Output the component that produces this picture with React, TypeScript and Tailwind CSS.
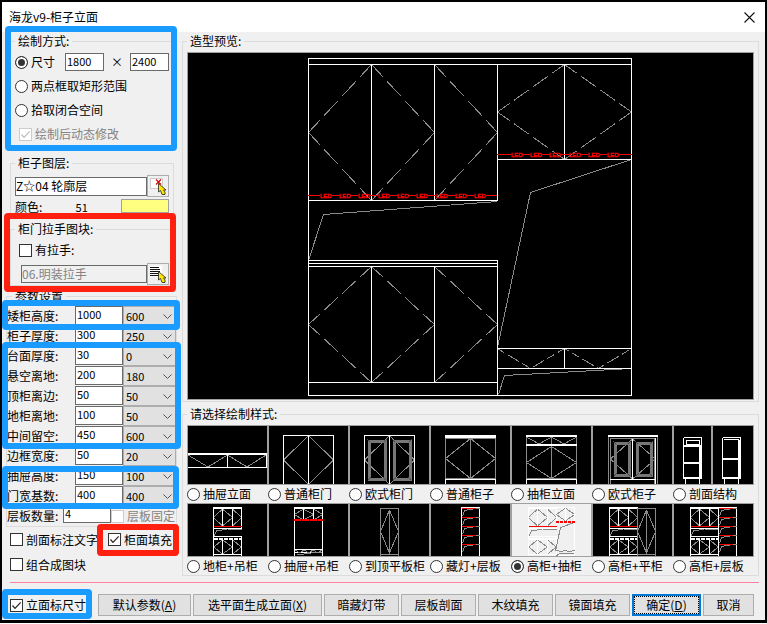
import { useState } from 'react';
import type { ReactNode } from 'react';

const params = [
  { label: '矮柜高度', value: '1000', preset: '600' },
  { label: '柜子厚度', value: '300', preset: '250' },
  { label: '台面厚度', value: '30', preset: '0' },
  { label: '悬空离地', value: '200', preset: '180' },
  { label: '顶柜离边', value: '50', preset: '50' },
  { label: '地柜离地', value: '100', preset: '50' },
  { label: '中间留空', value: '450', preset: '600' },
  { label: '边框宽度', value: '50', preset: '20' },
  { label: '抽屉高度', value: '150', preset: '100' },
  { label: '门宽基数', value: '400', preset: '400' },
];

/* ---------- form controls ---------- */

function Group({
  title,
  className = '',
  children,
}: {
  title: string;
  className?: string;
  children: ReactNode;
}) {
  return (
    <fieldset className={`min-w-0 border border-[#dcdcdc] ${className}`}>
      <legend className="px-[3px] leading-4">{title}:</legend>
      {children}
    </fieldset>
  );
}

function Radio({
  name,
  label,
  checked,
  onChange,
}: {
  name: string;
  label: string;
  checked: boolean;
  onChange: () => void;
}) {
  return (
    <label className="flex items-center gap-[3px] whitespace-nowrap">
      <input
        type="radio"
        name={name}
        checked={checked}
        onChange={onChange}
        className="h-[13px] w-[13px] shrink-0 appearance-none rounded-full border border-[#333] bg-white checked:bg-[#333] checked:shadow-[inset_0_0_0_2px_white]"
      />
      {label}
    </label>
  );
}

function Check({
  label,
  checked = false,
  disabled = false,
}: {
  label: string;
  checked?: boolean;
  disabled?: boolean;
}) {
  return (
    <label
      className={`flex items-center gap-[3px] whitespace-nowrap ${disabled ? 'text-[#838383]' : ''}`}
    >
      <span className="relative h-[13px] w-[13px] shrink-0">
        <input
          type="checkbox"
          defaultChecked={checked}
          disabled={disabled}
          className="peer block h-[13px] w-[13px] appearance-none border border-[#333] bg-white disabled:border-[#ccc]"
        />
        <svg
          viewBox="0 0 13 13"
          className="pointer-events-none absolute inset-0 hidden text-[#222] peer-checked:block peer-disabled:text-[#bbb]"
        >
          <path d="M2.5 6.5 5 9.3 10.7 3.3" fill="none" stroke="currentColor" strokeWidth="1.2" />
        </svg>
      </span>
      {label}
    </label>
  );
}

function PushButton({ className, children }: { className: string; children: ReactNode }) {
  return (
    <button
      type="button"
      className={`h-[22px] shrink-0 whitespace-nowrap border border-[#adadad] bg-[#e1e1e1] leading-5 ${className}`}
    >
      {children}
    </button>
  );
}

function Cursor() {
  return (
    <path
      d="M10.5 7.5v8.500l2-1.500 1.500 4h3v-2.500l-1.500-2h2.500z"
      fill="#ffe600"
      stroke="#222"
      strokeWidth="0.8"
    />
  );
}

/* ---------- cabinet drawings ---------- */

// Opening marks of one door, hinge towards the pointed side
function Door({
  x1,
  x2,
  y1,
  y2,
  dashed = false,
}: {
  x1: number;
  x2: number;
  y1: number;
  y2: number;
  dashed?: boolean;
}) {
  const mid = (y1 + y2) / 2;
  const dash = dashed ? '18 6.5 22 7 22 6.5 18' : undefined;
  return (
    <g stroke="#8a8a8a">
      <path pathLength={100} strokeDasharray={dash} d={`M${x1} ${mid}L${x2} ${y1}`} />
      <path pathLength={100} strokeDasharray={dash} d={`M${x1} ${mid}L${x2} ${y2}`} />
    </g>
  );
}

function LedStrip({ x1, x2, y, marks }: { x1: number; x2: number; y: number; marks: number[] }) {
  const ends = [x1, ...marks.map((m) => m + 12)];
  const starts = [...marks, x2];
  return (
    <g>
      {ends.map((from, i) => (
        <path key={from} d={`M${from} ${y}H${starts[i]}`} stroke="#f00" />
      ))}
      {marks.map((m) => (
        <text
          key={m}
          x={m}
          y={y + 2.5}
          fill="#f00"
          stroke="#f00"
          strokeWidth="0.4"
          fontSize="6"
          className="font-['Liberation_Sans',sans-serif]"
        >
          LED
        </text>
      ))}
    </g>
  );
}

function Preview() {
  return (
    <svg
      viewBox="188 53 565 346"
      className="block h-[346px] w-full"
      fill="none"
      stroke="#fff"
      shapeRendering="crispEdges"
    >
      {/* doors */}
      <Door x1={308.5} x2={371.5} y1={64.5} y2={200.5} dashed />
      <Door x1={434.5} x2={371.5} y1={64.5} y2={200.5} dashed />
      <Door x1={497.5} x2={434.5} y1={64.5} y2={200.5} dashed />
      <Door x1={497.5} x2={564.5} y1={64.5} y2={159.5} dashed />
      <Door x1={631.5} x2={564.5} y1={64.5} y2={159.5} dashed />
      <Door x1={308.5} x2={371.5} y1={266.5} y2={382.5} dashed />
      <Door x1={434.5} x2={371.5} y1={266.5} y2={382.5} dashed />
      <Door x1={497.5} x2={434.5} y1={266.5} y2={382.5} dashed />
      {/* open areas */}
      <g stroke="#8a8a8a">
        <path d="M497.5 201.5 323.5 214.5 308.5 260.5" />
        <path d="M631.5 159.5 530.5 192.5 497.5 347.5" />
        <path d="M631.5 368.5 504.5 375.5 498.5 394.5" />
        <path strokeDasharray="8 4 13 4" d="M497.5 348.5 530.5 368.5 564.5 348.5 598.5 368.5 631.5 348.5" />
      </g>
      {/* carcass */}
      <path d="M308.5 58.5H631.5V395.5H308.5zM308.5 64.5H631.5M371.5 64.5V200.5M434.5 64.5V200.5M497.5 64.5V200.5M308.5 200.5H497.5" />
      <path d="M564.5 64.5V159.5M497.5 159.5H631.5" />
      <path d="M308.5 260.5H497.5V395.5M308.5 263.5H497.5M308.5 266.5H497.5M308.5 382.5H497.5M371.5 266.5V382.5M434.5 266.5V382.5" />
      <path d="M497.5 348.5H631.5M497.5 368.5H631.5M564.5 348.5V368.5" />
      <LedStrip x1={308} x2={497} y={195.5} marks={[320, 339, 358, 378, 397, 416, 436, 455, 474]} />
      <LedStrip x1={497} x2={632} y={154.5} marks={[511, 530, 549, 569, 588, 607]} />
    </svg>
  );
}

function DrawerFront() {
  return (
    <>
      <path stroke="#8a8a8a" d="M0 29 20 41 39.5 29 59 41 78 29" />
      <path d="M0 41.5H78.5V28M39.5 28V41" />
      <path strokeWidth="2" d="M0 28H79" />
    </>
  );
}

function PlainDoors() {
  return (
    <>
      <Door x1={14.5} x2={39.5} y1={9.5} y2={58.5} />
      <Door x1={64.5} x2={39.5} y1={9.5} y2={58.5} />
      <path d="M14.5 58V9.5H64.5V58M39.5 9.5V58" />
    </>
  );
}

function FramedPanel({ x, y, w, h }: { x: number; y: number; w: number; h: number }) {
  return (
    <g>
      <rect x={x} y={y} width={w} height={h} stroke="#777" strokeWidth="3" />
      <path
        d={`M${x - 1.5} ${y - 1.5}l3 3M${x + w + 1.5} ${y - 1.5}l-3 3M${x - 1.5} ${y + h + 1.5}l3 -3M${x + w + 1.5} ${y + h + 1.5}l-3 -3`}
        stroke="#444"
      />
    </g>
  );
}

function EuroDoors() {
  return (
    <>
      <Door x1={14.5} x2={39.5} y1={9.5} y2={58.5} />
      <Door x1={64.5} x2={39.5} y1={9.5} y2={58.5} />
      <FramedPanel x={19} y={15} w={16} h={38} />
      <FramedPanel x={44} y={15} w={16} h={38} />
      <path d="M14.5 58V9.5H64.5V58" />
      <path d="M39.5 9.5V58" />
    </>
  );
}

function PlainCabinet() {
  return (
    <>
      <Door x1={14.5} x2={39.5} y1={12.5} y2={52.5} />
      <Door x1={64.5} x2={39.5} y1={12.5} y2={52.5} />
      <path stroke="#8a8a8a" d="M14.5 12.5H64.5V52.5H14.5zM39.5 12V52" />
      <path d="M14.5 58V53.5H64.5V58" />
      <path strokeWidth="3" d="M14 10.5H65" />
    </>
  );
}

function DrawerCabinet() {
  return (
    <>
      <path stroke="#8a8a8a" d="M14.5 11 27 18 39.5 11 52 18 64.5 11" />
      <Door x1={14.5} x2={39.5} y1={20.5} y2={52.5} />
      <Door x1={64.5} x2={39.5} y1={20.5} y2={52.5} />
      <path stroke="#8a8a8a" d="M14.5 10V52.5H64.5V10M39.5 11V52" />
      <path d="M14.5 58V53.5H64.5V58" />
      <path strokeWidth="2" d="M14 10H65M14 19H65" />
    </>
  );
}

function EuroCabinet() {
  return (
    <>
      <Door x1={17.5} x2={39.5} y1={13} y2={53} />
      <Door x1={62.5} x2={39.5} y1={13} y2={53} />
      <FramedPanel x={22} y={17} w={14} h={32} />
      <FramedPanel x={44} y={17} w={14} h={32} />
      <path stroke="#8a8a8a" d="M15.5 58V11M17.5 58V12.5H61.5V58M64.5 58V11" />
      <path d="M39.5 13V53M62.5 12V58M17 53.5H62" />
      <path strokeWidth="2" d="M15 10H65" />
    </>
  );
}

function Sections() {
  return (
    <>
      <path d="M9.5 11.5H27.5V53M9.5 11.5V53M11.5 58V53M25.5 58V53M12.5 14.5H25.5V18.5H12.5z" />
      <path strokeWidth="2" d="M10 20H28M10 37H28M10 52H28M26 20V52" />
      <path d="M48.5 11.5H66.5V53M48.5 11.5V53M50.5 58V53M64.5 58V53M50 13.5H65" />
      <path strokeWidth="2" d="M49 33H67M49 52H67M65 14V52" />
      <path stroke="#a0a0a0" strokeWidth="2" d="M38 0V58" />
    </>
  );
}

// Three-door wall unit over a three-door base unit, 28 wide
function StackedUnit({ x, pale = false }: { x: number; pale?: boolean }) {
  const a = x + 9;
  const b = x + 19;
  const c = x + 28;
  return (
    <>
      <Door x1={x} x2={a} y1={5} y2={22} />
      <Door x1={b} x2={a} y1={5} y2={22} />
      <Door x1={c} x2={b} y1={5} y2={22} />
      <Door x1={x} x2={a} y1={36} y2={50} />
      <Door x1={b} x2={a} y1={36} y2={50} />
      <Door x1={c} x2={b} y1={36} y2={50} />
      <path stroke="#8a8a8a" d={`M${c} 25H${x + 14}L${x + 3} 27 ${x} 33`} />
      <path d={`M${x} 52V3.5H${c}V24M${x} 24.5H${c}M${x} 32.5H${c}V52M${x} 50.5H${c}`} />
      <path strokeWidth="2" d={`M${x} 4H${c}`} />
      <path strokeWidth="2" d={`M${x} 35H${c}`} strokeDasharray={pale ? undefined : '4 1'} />
      <path d={`M${a} 5V23M${b} 5V23M${a} 35V51M${b} 35V51`} />
      <path stroke="#f00" d={`M${x} 22.5H${c}`} />
    </>
  );
}

function Shelves({ x }: { x: number }) {
  return (
    <>
      <path d={`M${x} 52V3.5H${x + 18}V52`} />
      {[4.5, 13.5, 22.5, 31.5, 40.5].map((y) => (
        <g key={y}>
          <path stroke="#8a8a8a" d={`M${x + 18} ${y}H${x + 14}L${x + 3} ${y + 2} ${x + 1} ${y + 8}`} />
          <path stroke="#f00" d={`M${x} ${y}H${x + 14}`} />
        </g>
      ))}
    </>
  );
}

function TallDoor({ x }: { x: number }) {
  return (
    <g stroke="#8a8a8a">
      <Door x1={x} x2={x + 9} y1={6} y2={49} />
      <Door x1={x + 18} x2={x + 9} y1={6} y2={49} />
      <path d={`M${x} 52V4.5H${x + 18}V52M${x + 9} 6V50M${x} 50.5H${x + 18}`} />
    </g>
  );
}

function HangingWithDrawer() {
  return (
    <>
      <Door x1={25.5} x2={34.5} y1={5} y2={16} />
      <Door x1={44.5} x2={34.5} y1={5} y2={16} />
      <Door x1={53.5} x2={44.5} y1={5} y2={16} />
      <path d="M25.5 52V4H53.5V52M34.5 5V16M44.5 5V16M25.5 45.5H53.5M25.5 48.5H44" />
      <path stroke="#8a8a8a" d="M26 46 31 49 35 46 40 49 44 46 49 49 53 46M53 48 42 49 28 51" />
      <path strokeWidth="2" d="M25 4H54" />
      <path stroke="#f00" strokeWidth="2" strokeDasharray="7 1" d="M25 16H54" />
    </>
  );
}

function TallWithDrawer() {
  return (
    <>
      <rect width="79" height="52" fill="#f0f0f0" stroke="none" />
      <StackedUnit x={16.5} pale />
      <Door x1={44.5} x2={53.5} y1={4} y2={17} />
      <Door x1={62.5} x2={53.5} y1={4} y2={17} />
      <path d="M44.5 3.5H62.5V51.5H44.5M53.5 4V17" />
      <path stroke="#8a8a8a" d="M62.5 18.5 48.5 23.5 43.5 47M44.5 46 49 48 53 46 57 48 62.5 46M62 49 47 50 44 52" />
      <path stroke="#f00" strokeWidth="2" strokeDasharray="3 1" d="M44 18H63" />
    </>
  );
}

const styles: { label: string; height: number; art: ReactNode }[] = [
  { label: '抽屉立面', height: 58, art: <DrawerFront /> },
  { label: '普通柜门', height: 58, art: <PlainDoors /> },
  { label: '欧式柜门', height: 58, art: <EuroDoors /> },
  { label: '普通柜子', height: 58, art: <PlainCabinet /> },
  { label: '抽柜立面', height: 58, art: <DrawerCabinet /> },
  { label: '欧式柜子', height: 58, art: <EuroCabinet /> },
  { label: '剖面结构', height: 58, art: <Sections /> },
  { label: '地柜+吊柜', height: 52, art: <StackedUnit x={25.5} /> },
  { label: '抽屉+吊柜', height: 52, art: <HangingWithDrawer /> },
  { label: '到顶平板柜', height: 52, art: <TallDoor x={30.5} /> },
  { label: '藏灯+层板', height: 52, art: <Shelves x={30.5} /> },
  { label: '高柜+抽柜', height: 52, art: <TallWithDrawer /> },
  {
    label: '高柜+平柜',
    height: 52,
    art: (
      <>
        <StackedUnit x={16.5} />
        <TallDoor x={44.5} />
      </>
    ),
  },
  {
    label: '高柜+层板',
    height: 52,
    art: (
      <>
        <StackedUnit x={16.5} />
        <Shelves x={44.5} />
      </>
    ),
  },
];

/* ---------- dialog ---------- */

const field = 'border border-[#6a6a6a] bg-white text-[11px] leading-3 pl-px pb-[3px]';

export default function App() {
  const [mode, setMode] = useState('尺寸');
  const [style, setStyle] = useState('高柜+抽柜');

  return (
    <div className="relative border-2 border-b-[3px] border-black bg-[#f0f0f0] font-['Noto_Sans_CJK_SC',sans-serif] text-xs text-black">
      {/* Title bar */}
      <header className="flex h-[30px] items-center justify-between bg-white pl-[7px] pr-[10px]">
        <h1>海龙v9-柜子立面</h1>
        <button type="button" aria-label="关闭">
          <svg viewBox="0 0 11 11" className="h-[11px] w-[11px]">
            <path d="M.5.5l10 10M10.5.5l-10 10" stroke="#111" strokeWidth="1.1" />
          </svg>
        </button>
      </header>

      <div className="flex pr-[6px] pt-px">
        {/* Settings */}
        <div className="w-[180px] shrink-0">
          <Group title="绘制方式" className="mx-2 pl-1 pt-px">
            <div className="flex h-6 items-center">
              <Radio name="mode" label="尺寸" checked={mode === '尺寸'} onChange={() => setMode('尺寸')} />
              <input aria-label="宽" defaultValue="1800" className={`ml-[10px] h-[18px] w-[39px] ${field}`} />
              <span className="w-[26px] text-center">×</span>
              <input aria-label="高" defaultValue="2400" className={`h-[18px] w-[39px] ${field}`} />
            </div>
            {['两点框取矩形范围', '拾取闭合空间'].map((m) => (
              <div key={m} className="flex h-6 items-center">
                <Radio name="mode" label={m} checked={mode === m} onChange={() => setMode(m)} />
              </div>
            ))}
            <div className="flex h-6 items-center pl-1">
              <Check label="绘制后动态修改" checked disabled />
            </div>
          </Group>

          <Group title="柜子图层" className="mx-2 mt-2 pl-1 pr-1 pt-1">
            <div className="flex items-center">
              <input
                aria-label="图层"
                defaultValue="Z☆04 轮廓层"
                className="h-[19px] min-w-0 flex-1 border border-[#6a6a6a] bg-white pb-[2px] leading-4"
              />
              <button
                type="button"
                aria-label="拾取图层"
                className="h-[22px] w-[22px] border border-[#adadad] bg-[#f0f0f0]"
              >
                <svg viewBox="0 0 20 20" className="h-5 w-5" fill="none">
                  <path d="M2.500 2.500h12v10h-12z" fill="#fff" stroke="#ccc" />
                  <path d="M8 3.500l5 5M13 3.500l-5 5" stroke="#d00" strokeWidth="1.2" />
                  <Cursor />
                </svg>
              </button>
            </div>
            <div className="mt-[2px] flex h-4 items-center justify-between">
              <span>颜色:</span>
              <span className="text-[11px]">51</span>
              <span className="h-[14px] w-12 self-start border border-[#a0a0a0] bg-[#ffff80]" />
            </div>
          </Group>

          <Group title="柜门拉手图块" className="mx-2 mt-[5px] pl-1 pr-1">
            <div className="flex h-[26px] items-center pl-1">
              <Check label="有拉手:" />
            </div>
            <div className="flex items-center pl-[6px]">
              <input
                aria-label="拉手图块"
                defaultValue="06.明装拉手"
                disabled
                className="h-[18px] min-w-0 flex-1 border border-[#6a6a6a] bg-[#f0f0f0] pb-[2px] leading-4 text-[#838383]"
              />
              <button
                type="button"
                aria-label="拾取图块"
                className="h-[22px] w-[22px] border border-[#adadad] bg-[#f0f0f0]"
              >
                <svg viewBox="0 0 20 20" className="h-5 w-5" fill="none">
                  <path d="M2 2h12v11H2z" fill="#fff" />
                  <path d="M2 3.500h9M2 5.500h10M2 7.500h10M2 9.500h10M2 11.500h10" stroke="#111" />
                  <Cursor />
                </svg>
              </button>
            </div>
          </Group>

          <fieldset className="ml-1 mr-[5px] mt-[2px] min-w-0 border border-[#dcdcdc] pt-[2px]">
            <legend className="ml-[5px] px-[3px] leading-4">参数设置</legend>
            {params.map((p) => (
              <div key={p.label} className="flex h-5">
                <label htmlFor={p.label} className="w-[68px] whitespace-nowrap leading-5">
                  {p.label}:
                </label>
                <input id={p.label} defaultValue={p.value} className={`h-[19px] w-12 ${field}`} />
                <div className="relative min-w-0 flex-1">
                  <select
                    aria-label={`${p.label}常用值`}
                    defaultValue={p.preset}
                    className="block h-5 w-full appearance-none border border-[#adadad] bg-[#e1e1e1] pl-[2px] text-[11px] leading-4"
                  >
                    <option>{p.preset}</option>
                  </select>
                  <svg
                    viewBox="0 0 9 5"
                    className="pointer-events-none absolute right-1 top-2 h-[5px] w-[9px]"
                  >
                    <path d="M.5.5l4 4 4-4" fill="none" stroke="#555" />
                  </svg>
                </div>
              </div>
            ))}
            <div className="flex h-5">
              <label htmlFor="boards" className="w-14 whitespace-nowrap leading-5">
                层板数量:
              </label>
              <input id="boards" defaultValue="4" className={`h-[17px] w-12 ${field}`} />
              <Check label="层板固定" disabled />
            </div>
          </fieldset>

          <div className="flex h-[25px] items-center justify-between pl-2 pr-[10px]">
            <Check label="剖面标注文字" />
            <Check label="柜面填充" checked />
          </div>
          <div className="flex h-[25px] items-center pl-2">
            <Check label="组合成图块" />
          </div>
        </div>

        {/* Preview and styles */}
        <div className="min-w-0 flex-1">
          <Group title="造型预览" className="px-1 pb-px pt-[3px]">
            <div className="border border-[#a0a0a0] bg-black">
              <Preview />
            </div>
          </Group>

          <Group title="请选择绘制样式" className="mt-1 px-1 pt-[3px]">
            <div className="grid grid-cols-7">
              {styles.map((s) => (
                <div key={s.label}>
                  <div className="border border-[#a0a0a0] bg-black">
                    <svg
                      viewBox={`0 0 79 ${s.height}`}
                      className={`block w-full ${s.height === 58 ? 'h-[58px]' : 'h-[52px]'}`}
                      fill="none"
                      stroke="#fff"
                      shapeRendering="crispEdges"
                    >
                      {s.art}
                    </svg>
                  </div>
                  <div className="flex h-[18px] items-center">
                    <Radio
                      name="style"
                      label={s.label}
                      checked={style === s.label}
                      onChange={() => setStyle(s.label)}
                    />
                  </div>
                </div>
              ))}
            </div>
          </Group>
        </div>
      </div>

      {/* Actions */}
      <footer className="pb-1 pl-2 pr-[6px] pt-[5px]">
        <div className="h-px bg-[#ff80a0]" />
        <div className="mt-[11px] flex items-center gap-[2px]">
          <div className="w-[86px] shrink-0">
            <Check label="立面标尺寸" checked />
          </div>
          <PushButton className="w-[93px]">
            默认参数(<u>A</u>)
          </PushButton>
          <PushButton className="w-[129px]">
            选平面生成立面(<u>X</u>)
          </PushButton>
          <PushButton className="w-[75px]">暗藏灯带</PushButton>
          <PushButton className="w-[75px]">层板剖面</PushButton>
          <PushButton className="w-[75px]">木纹填充</PushButton>
          <PushButton className="w-[75px]">镜面填充</PushButton>
          <button
            type="button"
            className="h-[22px] w-[69px] shrink-0 border-2 border-[#0078d7] bg-[#e1e1e1]"
          >
            <span className="block border border-dotted border-black leading-4">
              确定(<u>D</u>)
            </span>
          </button>
          <PushButton className="w-[51px]">取消</PushButton>
        </div>
      </footer>

      {/* Highlight frames over the settings */}
      <div className="pointer-events-none absolute left-[3px] top-6 h-[125px] w-[172px] rounded border-[6px] border-[#1a9bff]" />
      <div className="pointer-events-none absolute left-[2px] top-[211px] h-[79px] w-[172px] rounded border-[6px] border-[#ff2010]" />
      <div className="pointer-events-none absolute left-0 top-[298px] h-[30px] w-[178px] rounded border-[6px] border-[#1a9bff]" />
      <div className="pointer-events-none absolute left-0 top-[340px] h-[107px] w-[179px] rounded border-[6px] border-[#1a9bff]" />
      <div className="pointer-events-none absolute left-0 top-[464px] h-[43px] w-[177px] rounded border-[6px] border-[#1a9bff]" />
      <div className="pointer-events-none absolute left-[95px] top-[522px] h-8 w-[82px] rounded border-[6px] border-[#ff2010]" />
      <div className="pointer-events-none absolute left-0 top-[587px] h-[30px] w-[90px] rounded border-[6px] border-[#1a9bff]" />
    </div>
  );
}
